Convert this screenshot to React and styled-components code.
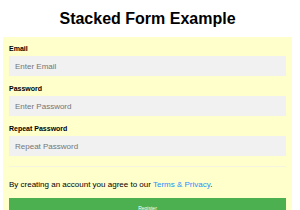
import React from 'react';
import styled, { createGlobalStyle } from 'styled-components';

const GlobalStyle = createGlobalStyle`
  * { box-sizing: border-box; }
  body {
    margin: 0;
    background: #fff;
    font-family: "Liberation Sans", Arial, sans-serif;
  }
`;

const Page = styled.div`
  width: 300px;
  height: 210px;
  overflow: hidden;
  padding: 0 8px 0 3px;
`;

const Title = styled.h2`
  margin: 0;
  height: 37px;
  line-height: 37px;
  font-size: 16px;
  font-weight: bold;
  text-align: center;
  color: #000;
`;

const Panel = styled.form`
  background: #ffffcc;
  padding: 6px 6px 20px 6px;
`;

const Label = styled.label`
  display: block;
  font-size: 7px;
  font-weight: bold;
  line-height: 10px;
  margin-top: ${({ first }) => (first ? '1px' : '0')};
  color: #000;
`;

const Input = styled.input`
  display: block;
  width: 100%;
  height: 20px;
  margin: 2px 0 8px;
  padding: 0 6px;
  border: none;
  background: #f1f1f1;
  font-family: inherit;
  font-size: 8px;
  outline: none;

  &::placeholder {
    color: #757575;
  }
`;

const Rule = styled.hr`
  border: none;
  border-top: 1px solid #f4f4e0;
  margin: 10px 0 12px;
`;

const Note = styled.p`
  margin: 0 0 8px;
  font-size: 8px;
  line-height: 11px;
  color: #000;
`;

const Link = styled.a`
  color: dodgerblue;
  text-decoration: none;
`;

const Button = styled.button`
  display: block;
  width: 100%;
  border: none;
  background: #4caf50;
  color: #fff;
  font-family: inherit;
  font-size: 5px;
  padding: 7px 0;
  cursor: pointer;
`;

export default function App() {
  return (
    <>
      <GlobalStyle />
      <Page>
        <Title>Stacked Form Example</Title>
        <Panel onSubmit={(e) => e.preventDefault()}>
          <Label first htmlFor="email">Email</Label>
          <Input id="email" type="text" placeholder="Enter Email" />
          <Label htmlFor="psw">Password</Label>
          <Input id="psw" type="password" placeholder="Enter Password" />
          <Label htmlFor="psw-repeat">Repeat Password</Label>
          <Input id="psw-repeat" type="password" placeholder="Repeat Password" />
          <Rule />
          <Note>
            By creating an account you agree to our <Link href="#">Terms &amp; Privacy</Link>.
          </Note>
          <Button type="submit">Register</Button>
        </Panel>
      </Page>
    </>
  );
}
